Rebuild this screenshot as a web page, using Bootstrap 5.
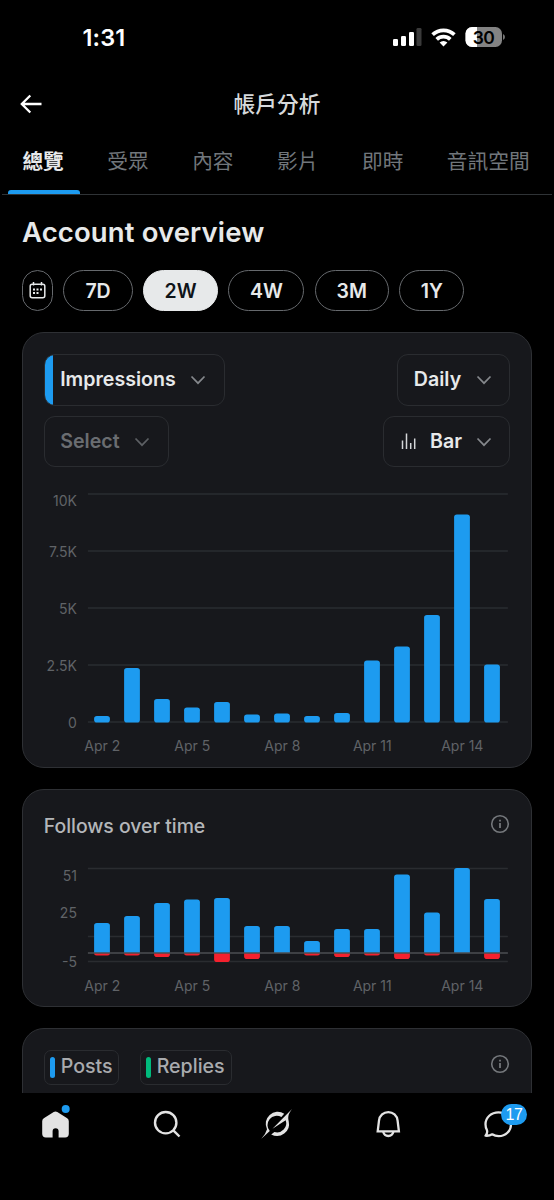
<!DOCTYPE html>
<html lang="zh-Hant">
<head>
<meta charset="utf-8">
<meta name="viewport" content="width=device-width, initial-scale=1">
<title>帳戶分析</title>
<link href="https://cdn.jsdelivr.net/npm/bootstrap@5.3.0/dist/css/bootstrap.min.css" rel="stylesheet">
<style>
body{background:#000;color:#e7e9ea;font-family:Inter,"Noto Sans CJK TC",sans-serif;height:1200px;overflow:hidden;line-height:1}
svg{display:block;flex:none}
.status{height:76px;padding:0 49px 0 82.500px}
.clock{font-size:23.5px;font-weight:600;color:#fff;letter-spacing:.1px}
.topbar{height:56px;padding-left:20px}
.topbar h1{font-size:21.7px;font-weight:500;color:#d6d9db;margin:0;padding-top:1px}
.tabs{height:63px;margin:0 2px;border-bottom:1px solid #2f3336;font-size:20.7px;color:#71767b}
.tabs a{color:inherit;text-decoration:none;height:62px;padding:19.5px 0 0 20.4px;width:84.9px;white-space:nowrap}
.tabs a.active{color:#e7e9ea;font-weight:700;position:relative}
.tabs a.active::after{content:"";position:absolute;left:6px;bottom:0;width:72px;height:4px;background:#1d9bf0;border-radius:3px 3px 0 0}
.main{padding:0 22px;height:898px;overflow:hidden}
.main h2{font-size:27.5px;font-weight:600;margin:0;height:75px;padding-top:21px;letter-spacing:.12px}
.pills{gap:10.3px}
.pill{height:41px;border:1.3px solid #66696d;border-radius:21px;font-size:19.5px;font-weight:600;color:#e7e9ea;padding:2px 0 0}
.pill.on{background:#e7e9ea;color:#0f1419;border-color:#e7e9ea}
.w-cal{width:31px;padding:0}.w-7d{width:69.5px}.w-2w{width:75px}.w-4w{width:76px}.w-3m{width:74px}.w-1y{width:65.5px}
.panel{width:510px;background:#17181c;border:1.3px solid #2e3034;border-radius:22px;overflow:hidden}
.p1{height:436px;margin-top:21px;padding-top:21px}
.p2{height:218px;margin-top:21px;padding-top:23.5px}
.p3{height:120px;margin-top:21px;padding-top:20.5px}
.px{padding-left:20.7px;padding-right:20.7px}
.row-two{margin-top:10px}
.sel{height:51.5px;border:1.3px solid #2a2c30;border-radius:11px;font-size:19.6px;font-weight:600;padding:1px 17.5px 0 15.5px;color:#e7e9ea;overflow:hidden}
.sel.imp{background:linear-gradient(90deg,#1d9bf0 8px,transparent 8px);width:181px}
.sel.none{width:125px;color:#6a6d71}
.sel.day{width:113px}.sel.bar{width:127px;padding-left:17px}
.sub-title{font-size:19.4px;font-weight:500;color:#b4b6b9;padding-top:3px}
.sub-head{height:52px}
.legend-box{height:35px;border:1.3px solid #2a2c30;border-radius:7px;padding-left:5px;gap:5.5px;font-size:19.6px;font-weight:500;color:#a9abae}
.legend-posts{width:75.5px}.legend-replies{width:92px;margin-left:20.5px}
.tick{width:5.5px;height:21px;border-radius:3px}
.tick.blue{background:#1d9bf0}.tick.green{background:#00ba7c}
.chart text{font-size:14px;fill:#606367}
.bottom{height:107px;background:#000;padding:15px 40px 0 40px}
.ic{position:relative;height:32px;width:32px}
.count{position:absolute;left:19px;top:-4px;width:26px;height:21px;border-radius:11px;background:#1d9bf0;color:#fff;font:16px/21px "Liberation Sans",sans-serif;text-align:center;letter-spacing:-.5px}
</style>
</head>
<body>
<div class="status d-flex align-items-center justify-content-between">
  <span class="clock">1:31</span>
  <svg width="113" height="24" viewBox="392 26 113 24">
    <g fill="#fff"><rect x="393" y="39" width="5" height="7" rx="1.3"/><rect x="401" y="36" width="5" height="10" rx="1.3"/><rect x="409" y="32" width="5" height="14" rx="1.3"/></g>
    <rect x="416.5" y="28" width="5" height="18" rx="1.3" fill="#3a3a3a"/>
    <g fill="none" stroke="#fff" stroke-width="3.7"><path d="M432.6 34.7a15.8 15.8 0 0 1 21.8 0"/><path d="M436.7 39.4a9.8 9.8 0 0 1 13.600 0"/></g>
    <path d="M439.600 42.400a5.800 5.800 0 0 1 7.800 0L443.500 46.500z" fill="#fff"/>
    <clipPath id="bat"><rect x="465.500" y="27" width="36.500" height="20" rx="6.500"/></clipPath>
    <g clip-path="url(#bat)"><rect x="465" y="26" width="38" height="22" fill="#838383"/><rect x="465" y="26" width="12" height="22" fill="#fff"/></g>
    <path d="M503 34q2 .8 2 3t-2 3z" fill="#777"/>
    <text x="483.500" y="43.500" text-anchor="middle" font-size="17.500" font-weight="600" letter-spacing="-.5" fill="#000">30</text>
  </svg>
</div>
<header class="topbar d-flex align-items-center position-relative">
  <svg width="22" height="20" viewBox="0 0 22 20" fill="none" stroke="#fff" stroke-width="2.3"><path d="M21.500 10H2M10.300 1.500L1.800 10l8.500 8.500"/></svg>
  <h1 class="position-absolute start-50 translate-middle-x">帳戶分析</h1>
</header>
<nav class="tabs d-flex">
  <a class="active" href="#">總覽</a><a href="#">受眾</a><a href="#">內容</a><a href="#">影片</a><a href="#">即時</a><a href="#">音訊空間</a>
</nav>
<main class="main">
  <h2>Account overview</h2>
  <div class="pills d-flex">
    <button class="btn pill w-cal d-flex align-items-center justify-content-center" aria-label="calendar"><svg width="17" height="17" viewBox="0 0 17 17" fill="none" stroke="#e7e9ea" stroke-width="1.5"><rect x="1.200" y="2.200" width="14.600" height="13.500" rx="2"/><path d="M4.500 0v3.500M12.500 0v3.500"/><path d="M4 7.500h2M7.500 7.500h2M11 7.500h2M4 11h2M7.500 11h2" stroke-width="1.800"/></svg></button>
    <button class="btn pill w-7d">7D</button><button class="btn pill on w-2w">2W</button><button class="btn pill w-4w">4W</button><button class="btn pill w-3m">3M</button><button class="btn pill w-1y">1Y</button>
  </div>
  <section class="panel p1">
    <div class="px d-flex justify-content-between">
      <div class="sel imp d-flex align-items-center justify-content-between">Impressions<svg width="16" height="10" viewBox="0 0 16 10" fill="none" stroke="#85888c" stroke-width="1.700"><path d="M1.500 1.500L8 8.200l6.500-6.700"/></svg></div>
      <div class="sel day d-flex align-items-center justify-content-between">Daily<svg width="16" height="10" viewBox="0 0 16 10" fill="none" stroke="#85888c" stroke-width="1.700"><path d="M1.500 1.500L8 8.200l6.500-6.700"/></svg></div>
    </div>
    <div class="px row-two d-flex justify-content-between">
      <div class="sel none d-flex align-items-center justify-content-between">Select<svg width="16" height="10" viewBox="0 0 16 10" fill="none" stroke="#5d6064" stroke-width="1.700"><path d="M1.500 1.500L8 8.200l6.500-6.700"/></svg></div>
      <div class="sel bar d-flex align-items-center justify-content-between"><svg width="15" height="17" viewBox="0 0 15 17" stroke="#d5d7d9" stroke-width="1.500"><path d="M1.500 7.500V16M5.500 .5V16M9.700 10V16M13.700 5.500V16"/></svg>Bar<svg width="16" height="10" viewBox="0 0 16 10" fill="none" stroke="#85888c" stroke-width="1.700"><path d="M1.500 1.500L8 8.200l6.500-6.700"/></svg></div>
    </div>
    <svg class="chart" id="impressions" width="507" height="290" viewBox="23.100 467 507 290"></svg>
  </section>
  <section class="panel p2">
    <div class="px sub-head d-flex justify-content-between align-items-start"><span class="sub-title">Follows over time</span><svg width="20" height="20" viewBox="0 0 20 20" fill="none" stroke="#74777b"><circle cx="10" cy="10" r="8.300" stroke-width="1.600"/><path d="M10 9v5M10 5.800v1.800" stroke-width="1.800"/></svg></div>
    <svg class="chart" id="follows" width="507" height="135" viewBox="23.100 866 507 135"></svg>
  </section>
  <section class="panel p3">
    <div class="px d-flex">
      <div class="legend-box legend-posts d-flex align-items-center"><span class="tick blue"></span>Posts</div>
      <div class="legend-box legend-replies d-flex align-items-center"><span class="tick green"></span>Replies</div>
      <svg class="ms-auto mt-1" width="20" height="20" viewBox="0 0 20 20" fill="none" stroke="#74777b"><circle cx="10" cy="10" r="8.300" stroke-width="1.600"/><path d="M10 9v5M10 5.800v1.800" stroke-width="1.800"/></svg>
    </div>
  </section>
</main>
<footer class="bottom d-flex justify-content-between">
  <div class="ic"><svg width="32" height="32" viewBox="40 1108 32 32" overflow="visible"><path d="M53.700 1112q1.800-1.200 3.600 0l9.900 6.200q1.600 1 1.600 3v12.600q0 3.700-3.700 3.700h-6.500v-6.300a3 3 0 0 0-6 0v6.300h-6.700q-3.700 0-3.700-3.700v-12.600q0-2 1.600-3z" fill="#e3e3e3"/><circle cx="65.700" cy="1109" r="4" fill="#1d9bf0"/></svg></div>
  <div class="ic"><svg width="32" height="32" viewBox="150 1108 32 32" fill="none" stroke="#e3e3e3" stroke-width="2.400"><circle cx="164.700" cy="1122.700" r="10.700"/><path d="M172.300 1130.300l6.200 6.200"/></svg></div>
  <div class="ic"><svg width="32" height="32" viewBox="261 1108 32 32" fill="#e3e3e3"><path d="M284.200 1113.700a12 12 0 0 0-17.200 15.500q-1.200 4.800-5.700 9.500l8.500-7.600a9.200 9.200 0 0 1 11.600-14z"/><path d="M292 1109c-4.300 5.400-4 8.500-3.300 12.200a12 12 0 0 1-17.500 13.200l3.200-2.400a9.200 9.200 0 0 0 11.300-11.800l-13.200 8.600z"/></svg></div>
  <div class="ic"><svg width="32" height="32" viewBox="371.500 1108 32 32" fill="none" stroke="#e3e3e3" stroke-width="2.300"><path d="M377.200 1131.300l1.300-10.700c.6-5 4.500-8.500 9.300-8.500s8.700 3.500 9.300 8.500l1.300 10.700z"/><path d="M382.500 1131.300q1.300 4.700 5.300 4.700t5.300-4.700"/></svg></div>
  <div class="ic"><svg width="32" height="32" viewBox="482 1108 32 32" fill="none" stroke="#e3e3e3" stroke-width="2.300" stroke-linejoin="round"><path d="M498.500 1112.300c7.200 0 12.500 5.200 12.500 11.900 0 6.900-5.500 12-12.300 12-2.600 0-4.700-.7-6.500-1.900q-3 1.800-6.700 1.400 2.400-2.600 1.400-5.600c-.9-1.800-1.400-3.700-1.400-5.900 0-6.700 5.700-11.900 13-11.900z"/></svg><span class="count">17</span></div>
</footer>
<script>
// Both charts share one horizontal scale: a bar every 30 units from Apr 2.
const line = (y, c = '#2a2c30') => `<path d="M88 ${y}H508" stroke="${c}" stroke-width="1.600"/>`;
const label = (x, y, t, a) => `<text x="${x}" y="${y}" text-anchor="${a}">${t}</text>`;
const days = y => [2, 5, 8, 11, 14].map((d, i) => label(102.400 + 90 * i, y, 'Apr ' + d, 'middle')).join('');
const views = [716, 668, 699, 707.5, 702, 714.5, 713.5, 716, 713, 660.5, 646.5, 615, 514.5, 664.5];
impressions.innerHTML = [494, 551, 608, 665, 722].map(y => line(y)).join('')
  + [['10K', 505.5], ['7.5K', 557], ['5K', 614], ['2.5K', 671], ['0', 727.5]].map(l => label(77, l[1], l[0], 'end')).join('')
  + views.map((t, i) => `<rect x="${94.200 + 30 * i}" y="${t}" width="15.800" height="${722.600 - t}" rx="2.800" fill="#1d9bf0"/>`).join('')
  + days(751.3);
const gained = [923, 916, 903, 899.5, 898, 926, 926, 941, 929, 929, 874.5, 912.5, 868, 899];
const lost = [955.5, 955.5, 957, 955.5, 962, 959, 953, 955.5, 957, 955.5, 959, 955.5, 953, 959];
follows.innerHTML = [868.5, 936.5, 961.5].map(y => line(y)).join('')
  + [['51', 880.6], ['25', 917.6], ['-5', 967.2]].map(l => label(77, l[1], l[0], 'end')).join('')
  + gained.map((t, i) => { const x = 94.2 + 30 * i, b = lost[i], r = Math.min(2.8, b - 953);
    return `<path d="M${x} 953V${t + 2.8}q0-2.800 2.800-2.800h10.200q2.800 0 2.800 2.800V953z" fill="#1d9bf0"/>`
      + `<path d="M${x} 953V${b - r}q0 ${r} ${r} ${r}h${15.8 - 2 * r}q${r} 0 ${r} ${-r}V953z" fill="#f4212e"/>`; }).join('')
  + line(953, '#4c4e52') + days(990.6);
</script>
<script src="https://cdn.jsdelivr.net/npm/bootstrap@5.3.0/dist/js/bootstrap.bundle.min.js"></script>
</body>
</html>
